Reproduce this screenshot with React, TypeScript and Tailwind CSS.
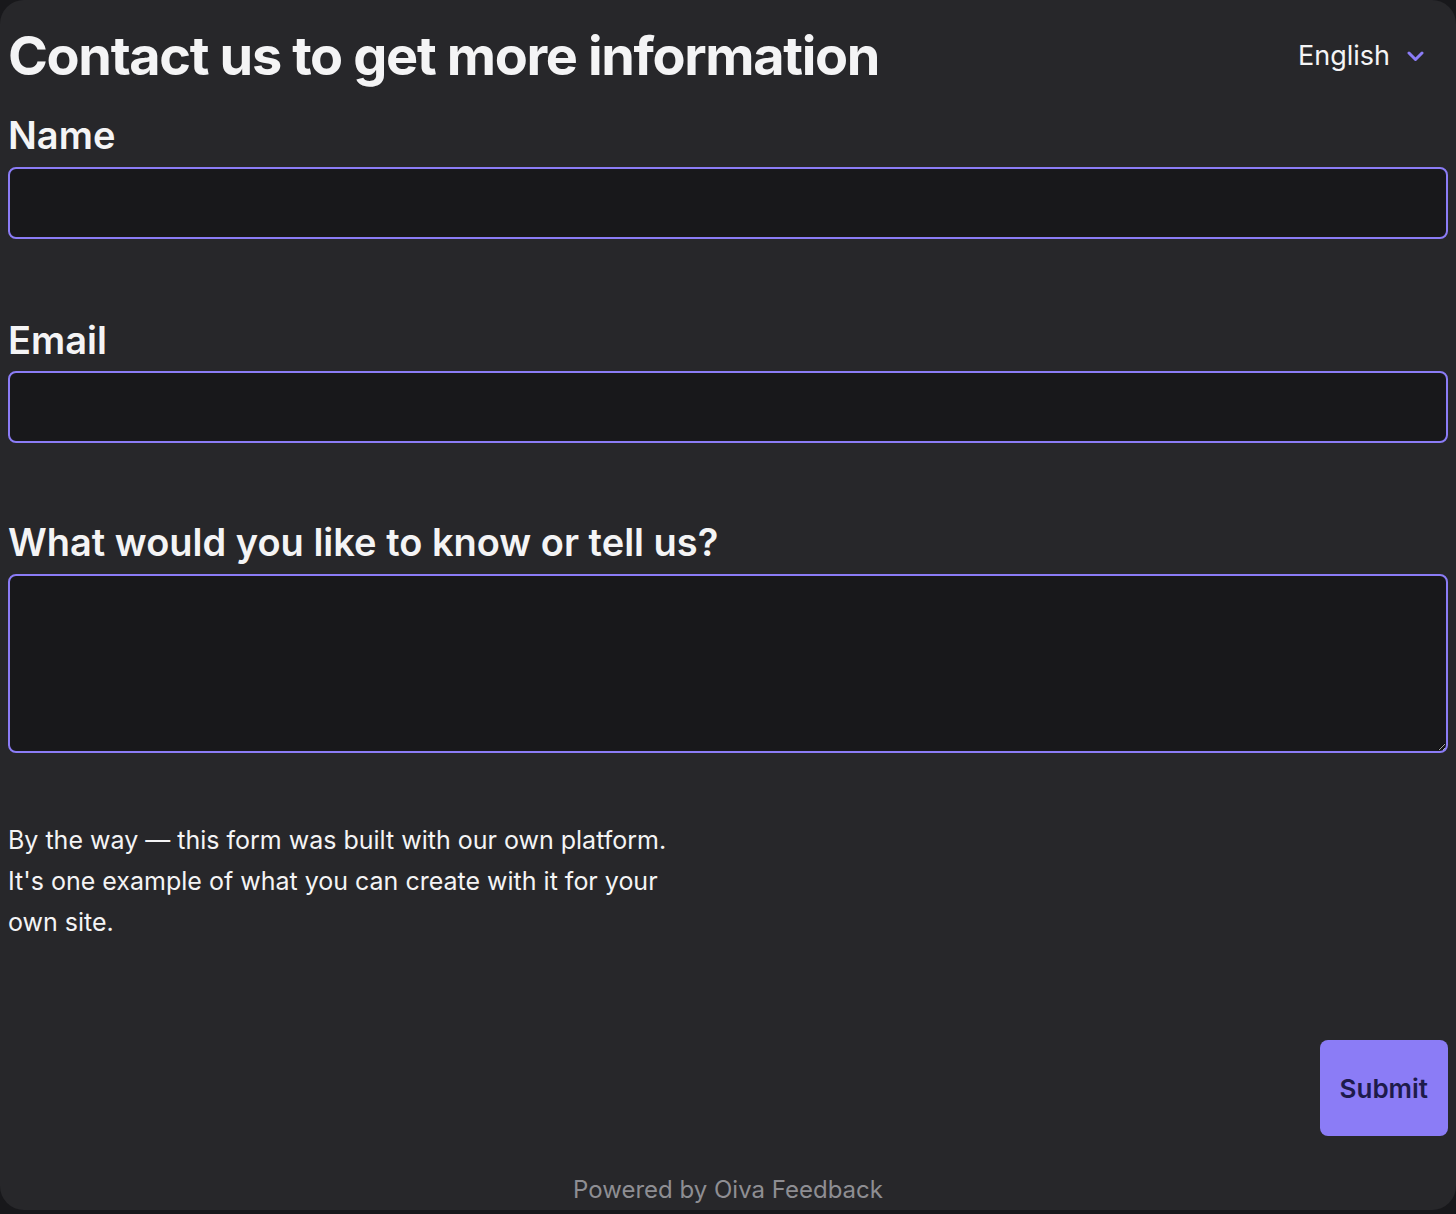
export default function App() {
  return (
    <div className="min-h-screen bg-[#18181b]" style={{ fontFamily: 'Inter, "Noto Sans", sans-serif' }}>
      <div className="bg-[#27272a] rounded-3xl h-[1210px] px-2 flex flex-col text-[#f4f4f5]">
        {/* Header */}
        <div className="flex items-center justify-between pt-[28px]">
          <h1 className="text-[54px] leading-[56px] font-bold tracking-tight">
            Contact us to get more information
          </h1>
          <div className="flex items-center gap-[17px] pr-6 text-[27px] leading-[56px]">
            <span>English</span>
            <svg className="w-[17px] h-[11px] text-[#8b7cf6]" fill="none" stroke="currentColor" viewBox="0 0 17 11">
              <path strokeLinecap="round" strokeLinejoin="round" strokeWidth={3} d="M2 2l6.5 6.5L15 2" />
            </svg>
          </div>
        </div>

        {/* Form */}
        <form className="flex flex-col flex-1" onSubmit={(e) => e.preventDefault()}>
          <label className="mt-[28px] mb-[9px] text-[38px] leading-[46px] font-semibold">Name</label>
          <input
            type="text"
            className="h-[72px] rounded-lg border-2 border-[#8b7cf6] bg-[#18181b] px-4 text-2xl outline-none"
          />

          <label className="mt-[78px] mb-[8px] text-[38px] leading-[46px] font-semibold">Email</label>
          <input
            type="email"
            className="h-[72px] rounded-lg border-2 border-[#8b7cf6] bg-[#18181b] px-4 text-2xl outline-none"
          />

          <label className="mt-[76px] mb-[9px] text-[38px] leading-[46px] font-semibold">
            What would you like to know or tell us?
          </label>
          <textarea className="h-[179px] rounded-lg border-2 border-[#8b7cf6] bg-[#18181b] px-4 py-3 text-2xl outline-none" />

          <p className="mt-[67px] max-w-[670px] text-[25px] leading-[41px]">
            By the way — this form was built with our own platform. It's one example of what you can create with it for
            your own site.
          </p>

          <div className="flex justify-end mt-auto">
            <button
              type="submit"
              className="h-24 px-5 rounded-lg bg-[#8b7cf6] text-[#1e1b4b] text-[26px] font-semibold"
            >
              Submit
            </button>
          </div>

          <div className="pt-[38px] pb-[4px] text-center text-[24px] leading-[32px] text-[#8e8e93]">
            Powered by Oiva Feedback
          </div>
        </form>
      </div>
    </div>
  )
}
